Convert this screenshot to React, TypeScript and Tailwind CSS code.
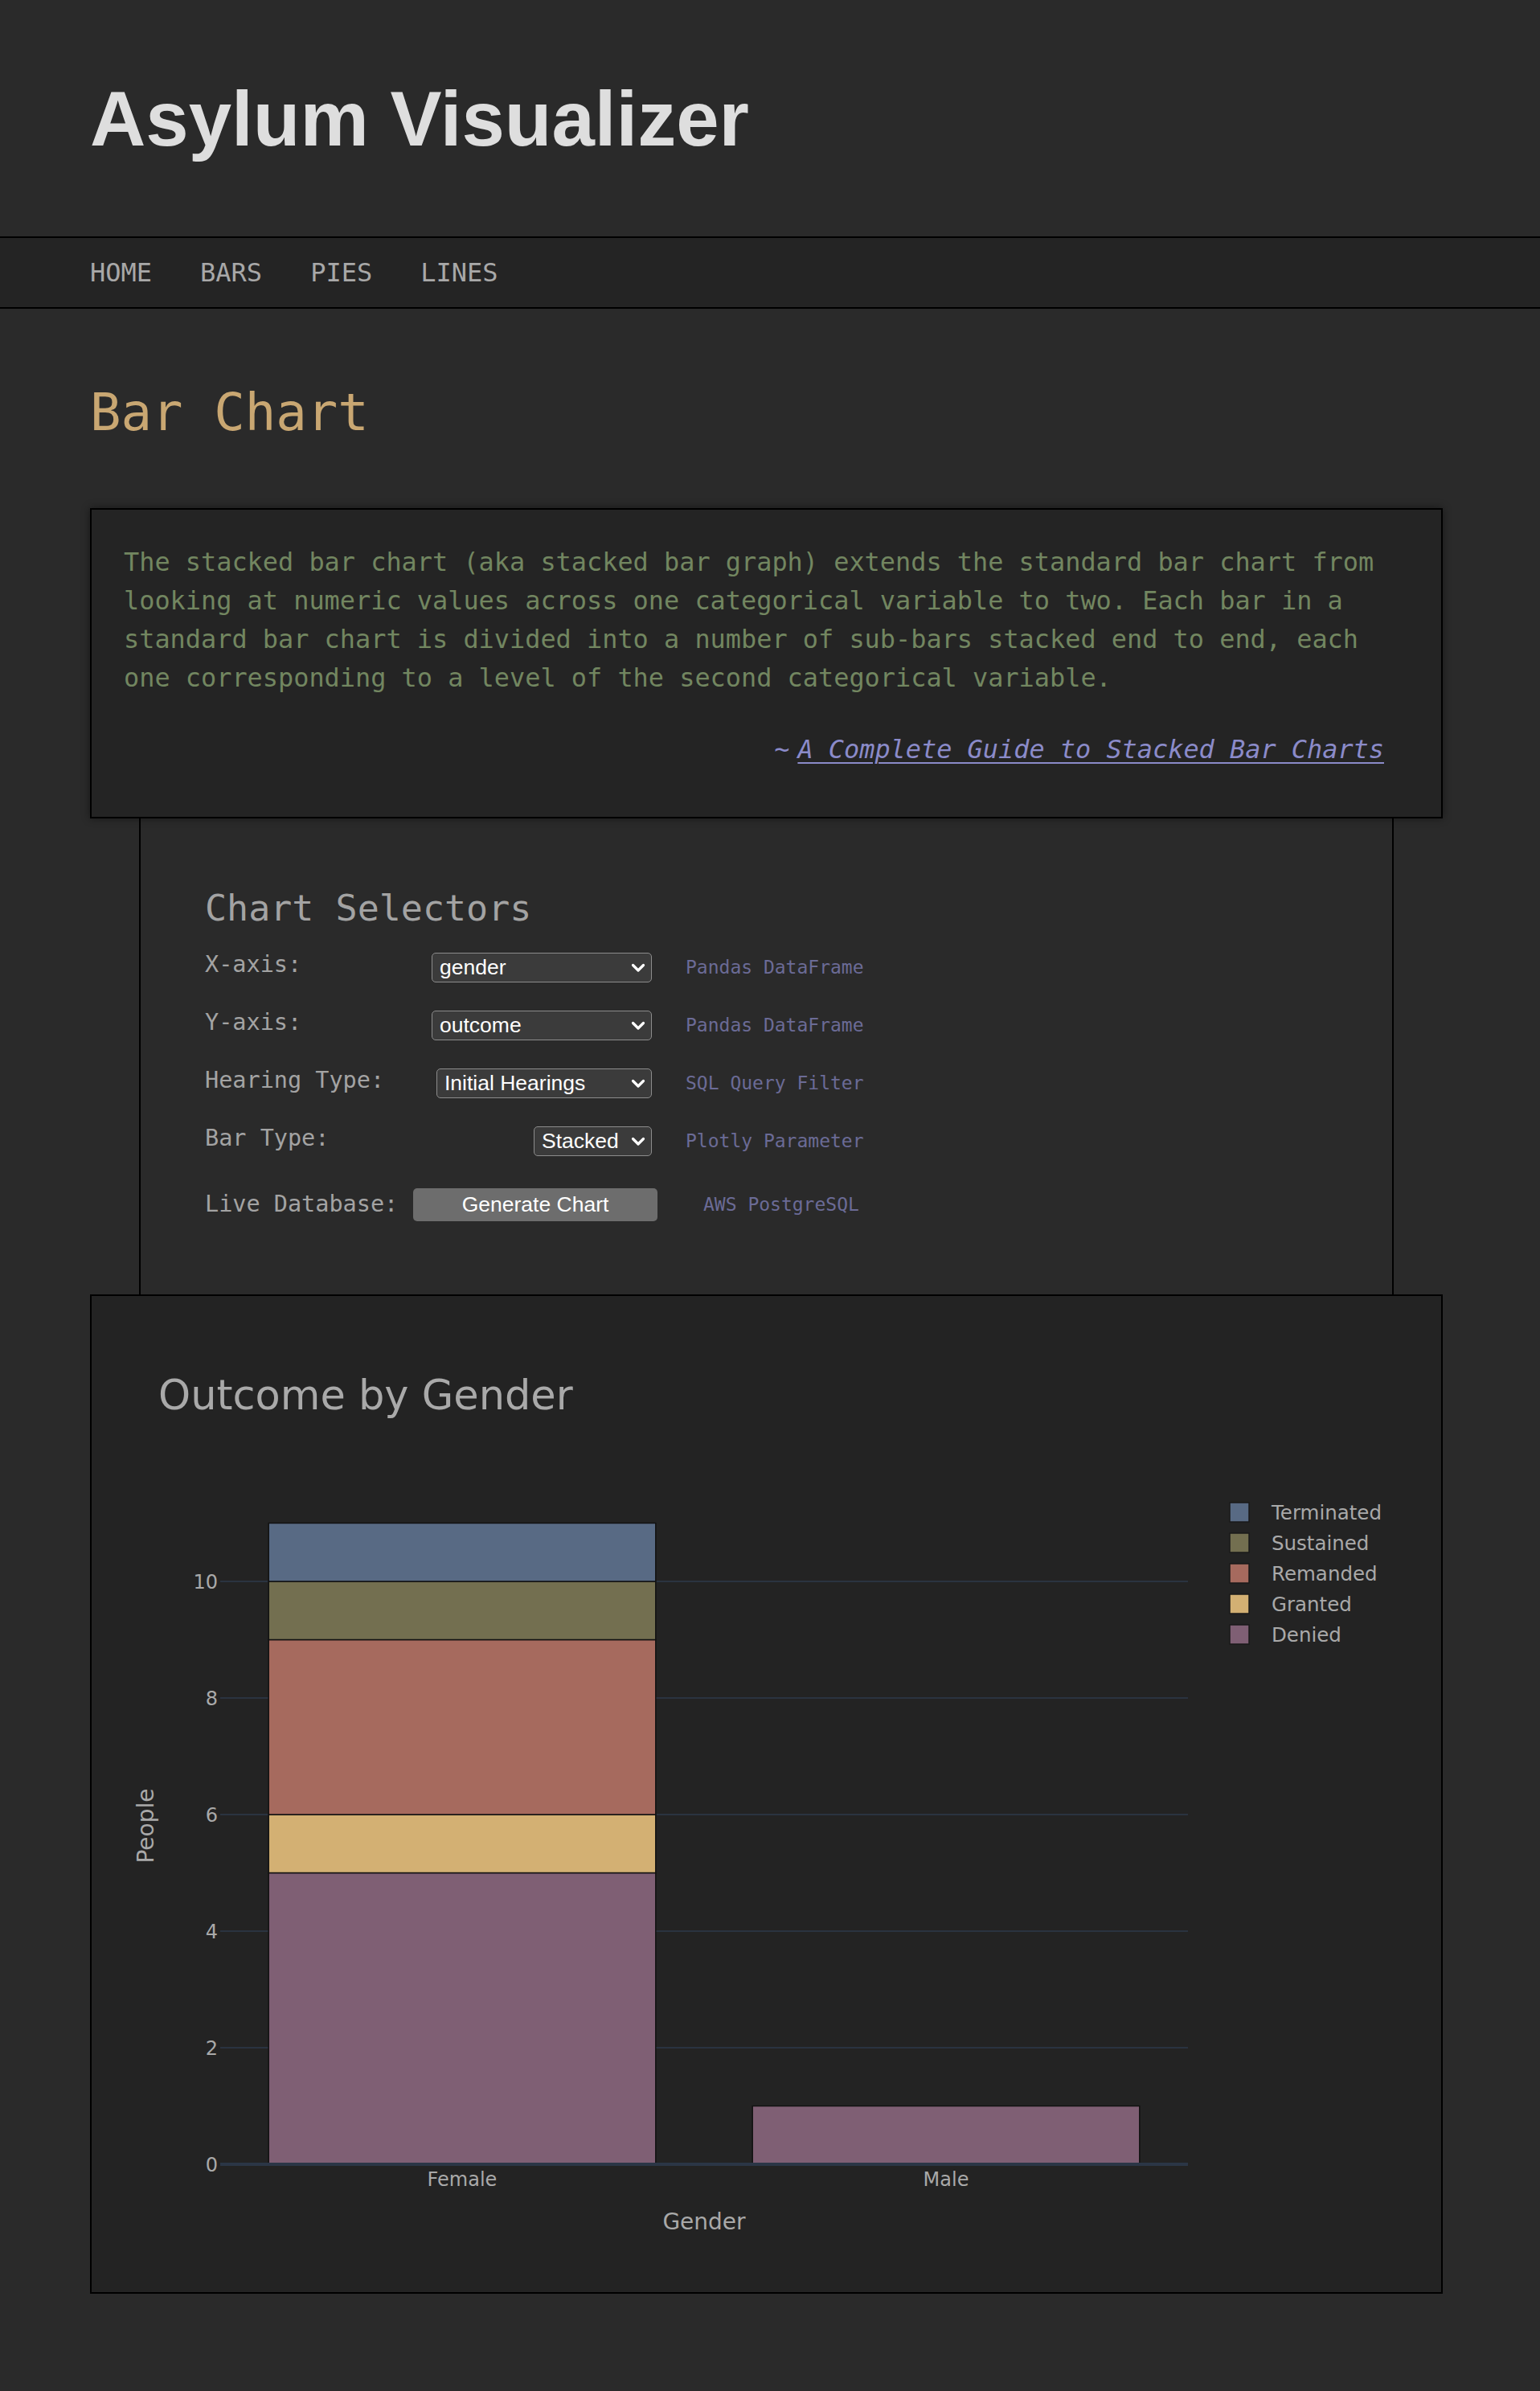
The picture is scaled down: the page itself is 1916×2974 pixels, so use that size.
import { ReactNode } from 'react'

const series = [
  { name: 'Terminated', color: '#586a84' },
  { name: 'Sustained', color: '#736f50' },
  { name: 'Remanded', color: '#a66a5e' },
  { name: 'Granted', color: '#d3b073' },
  { name: 'Denied', color: '#7f5f74' },
]

// stacked segments, bottom to top: [name, from, to]
const female: [string, number, number][] = [
  ['Denied', 0, 5],
  ['Granted', 5, 6],
  ['Remanded', 6, 9],
  ['Sustained', 9, 10],
  ['Terminated', 10, 11],
]
const male: [string, number, number][] = [['Denied', 0, 1]]

const colorOf = (name: string) => series.find((s) => s.name === name)?.color ?? '#888'

function Chevron() {
  return (
    <svg
      className="pointer-events-none absolute right-[8px] top-1/2 -translate-y-1/2"
      width="18"
      height="12"
      viewBox="0 0 18 12"
    >
      <path d="M2.5 2.5 L9 9 L15.5 2.5" fill="none" stroke="#ffffff" strokeWidth="3.2" strokeLinecap="round" strokeLinejoin="round" />
    </svg>
  )
}

function SelectBox({ value, options, className }: { value: string; options: string[]; className: string }) {
  return (
    <div className={`relative ${className}`}>
      <select
        defaultValue={value}
        className="h-[37px] w-full appearance-none rounded-[5px] border border-[#8c8c8c] bg-[#3b3b3b] pl-[9px] pr-[30px] font-['Liberation_Sans',Arial,sans-serif] text-[26.5px] leading-none text-white outline-none"
      >
        {options.map((o) => (
          <option key={o}>{o}</option>
        ))}
      </select>
      <Chevron />
    </div>
  )
}

function Row({ label, control, note, last }: { label: string; control: ReactNode; note: string; last?: boolean }) {
  return (
    <div className={last ? 'mt-[7px] flex h-[72px] items-center' : 'flex h-[72px] items-center'}>
      <div className={last ? 'w-[259px] text-[28.5px] leading-none text-[#a3a3a3]' : 'w-[259px] pb-[7px] text-[28.5px] leading-none text-[#a3a3a3]'}>
        {label}
      </div>
      {control}
      <div className={last ? 'ml-[57px] text-[23px] leading-none text-[#6b6b96]' : 'ml-[42px] text-[23px] leading-none text-[#6b6b96]'}>
        {note}
      </div>
    </div>
  )
}

function Chart() {
  const y0 = 2692
  const unit = 72.5
  const Y = (v: number) => y0 - v * unit
  const barW = 481.6
  const cats = [
    { label: 'Female', cx: 575, segs: female },
    { label: 'Male', cx: 1177, segs: male },
  ]
  return (
    <svg width="1679" height="1239" className="block font-['DejaVu_Sans',Verdana,sans-serif]">
      <g transform="translate(-114 -1612)">
        <text x="197" y="1753" fontSize="51" fill="#a9a9a9">
          Outcome by Gender
        </text>

        {[2, 4, 6, 8, 10].map((v) => (
          <line key={v} x1="274" x2="1478" y1={Y(v)} y2={Y(v)} stroke="#2a3340" strokeWidth="2" />
        ))}

        {cats.map((c) =>
          c.segs.map(([name, a, b]) => (
            <rect
              key={c.label + name}
              x={c.cx - barW / 2}
              y={Y(b)}
              width={barW}
              height={Y(a) - Y(b)}
              fill={colorOf(name)}
              stroke="#121212"
              strokeWidth="1.5"
            />
          ))
        )}

        <line x1="274" x2="1478" y1={y0} y2={y0} stroke="#2b3646" strokeWidth="4" />

        {[0, 2, 4, 6, 8, 10].map((v) => (
          <text key={v} x="271" y={Y(v) + 8.5} fontSize="24" fill="#a9a9a9" textAnchor="end">
            {v}
          </text>
        ))}

        {cats.map((c) => (
          <text key={c.label} x={c.cx} y="2719" fontSize="24" fill="#a9a9a9" textAnchor="middle">
            {c.label}
          </text>
        ))}

        <text x="876" y="2773" fontSize="28" fill="#a9a9a9" textAnchor="middle">
          Gender
        </text>
        <text transform="translate(191 2271) rotate(-90)" fontSize="28" fill="#a9a9a9" textAnchor="middle">
          People
        </text>

        {series.map((s, i) => (
          <g key={s.name}>
            <rect x="1530" y={1869 + i * 38} width="24" height="24" fill={s.color} stroke="#1a1a1a" strokeWidth="1.5" />
            <text x="1582" y={1890 + i * 38} fontSize="24.5" fill="#a9a9a9">
              {s.name}
            </text>
          </g>
        ))}
      </g>
    </svg>
  )
}

export default function App() {
  return (
    <div className="min-h-[2974px] w-[1916px] bg-[#2a2a2a] font-['DejaVu_Sans_Mono',monospace]">
      <header className="h-[294px] pl-[112px] pt-[100px]">
        <h1 className="font-['Liberation_Sans',Arial,sans-serif] text-[96px] font-bold leading-none text-[#dedede]">
          Asylum Visualizer
        </h1>
      </header>

      <nav className="border-y-2 border-black bg-[#242424] py-[27px] pl-[112px]">
        <ul className="flex gap-[60px] text-[32px] leading-none text-[#a8a8a8]">
          <li>HOME</li>
          <li>BARS</li>
          <li>PIES</li>
          <li>LINES</li>
        </ul>
      </nav>

      <main className="ml-[112px] w-[1683px] pb-[121px] pt-[97px]">
        <h2 className="text-[64px] leading-none text-[#c9a772]">Bar Chart</h2>

        <section className="relative z-10 mt-[87px] border-2 border-black bg-[#242424] pb-[60px] pl-[40px] pr-[44px] pt-[41px] shadow-[0_0_10px_rgba(0,0,0,0.45)]">
          <p className="text-[31.9px] leading-[48px] text-[#728660]">
            The stacked bar chart (aka stacked bar graph) extends the standard bar chart from looking at numeric
            values across one categorical variable to two. Each bar in a standard bar chart is divided into a number
            of sub-bars stacked end to end, each one corresponding to a level of the second categorical variable.
          </p>
          <p className="mt-[41px] pr-[27px] text-right text-[31.9px] leading-[48px] text-[#8b8bc9]">
            <span className="mr-[10px]">~</span>
            <a className="italic underline decoration-2 underline-offset-[5px]">A Complete Guide to Stacked Bar Charts</a>
          </p>
        </section>

        <section className="mx-[61px] border-x-2 border-black pb-[75.5px] pl-[80px] pt-[89px]">
          <h3 className="mb-[15.5px] text-[45px] leading-none text-[#a3a3a3]">Chart Selectors</h3>
          <Row
            label="X-axis:"
            control={
              <div className="flex w-[297px] justify-end">
                <SelectBox value="gender" options={['gender', 'age', 'country']} className="w-[274px]" />
              </div>
            }
            note="Pandas DataFrame"
          />
          <Row
            label="Y-axis:"
            control={
              <div className="flex w-[297px] justify-end">
                <SelectBox value="outcome" options={['outcome', 'gender', 'age']} className="w-[274px]" />
              </div>
            }
            note="Pandas DataFrame"
          />
          <Row
            label="Hearing Type:"
            control={
              <div className="flex w-[297px] justify-end">
                <SelectBox value="Initial Hearings" options={['Initial Hearings', 'Appeals', 'All Hearings']} className="w-[268px]" />
              </div>
            }
            note="SQL Query Filter"
          />
          <Row
            label="Bar Type:"
            control={
              <div className="flex w-[297px] justify-end">
                <SelectBox value="Stacked" options={['Stacked', 'Grouped']} className="w-[147px]" />
              </div>
            }
            note="Plotly Parameter"
          />
          <Row
            last
            label="Live Database:"
            control={
              <button className="h-[41px] w-[304px] rounded-[5px] bg-[#6d6d6d] font-['Liberation_Sans',Arial,sans-serif] text-[26.5px] leading-none text-white">
                Generate Chart
              </button>
            }
            note="AWS PostgreSQL"
          />
        </section>

        <section className="border-2 border-black bg-[#232323]">
          <Chart />
        </section>
      </main>
    </div>
  )
}
